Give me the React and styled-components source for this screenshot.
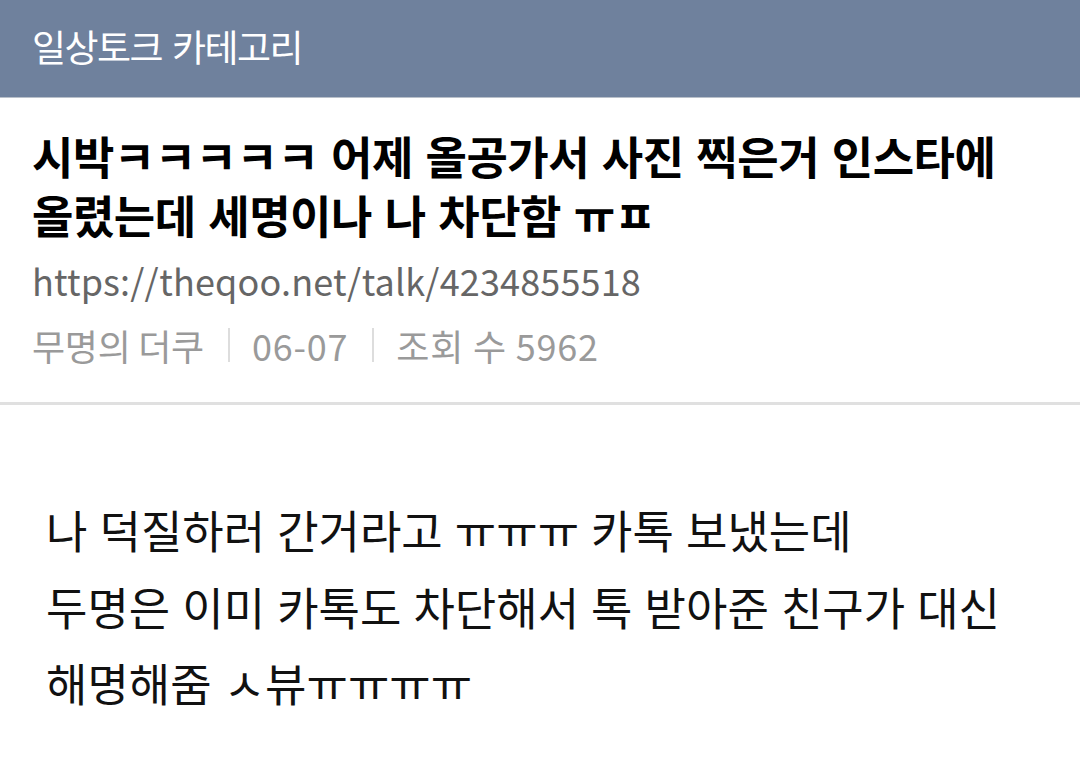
import styled, { createGlobalStyle } from "styled-components";

const GlobalStyle = createGlobalStyle`
  body {
    margin: 0;
    background: #ffffff;
    font-family: "Noto Sans CJK KR", "Noto Sans", sans-serif;
  }
`;

const post = {
  category: "일상토크 카테고리",
  title: "시박ㅋㅋㅋㅋㅋ 어제 올공가서 사진 찍은거 인스타에 올렸는데 세명이나 나 차단함 ㅠㅍ",
  url: "https://theqoo.net/talk/4234855518",
  meta: ["무명의 더쿠", "06-07", "조회 수 5962"],
  body: [
    "나 덕질하러 간거라고 ㅠㅠㅠ 카톡 보냈는데",
    "두명은 이미 카톡도 차단해서 톡 받아준 친구가 대신",
    "해명해줌 ㅅ뷰ㅠㅠㅠㅠ",
  ],
};

function App() {
  return (
    <Page>
      <GlobalStyle />
      <Header>{post.category}</Header>

      <PostHead>
        <Title>{post.title}</Title>
        <Url>{post.url}</Url>
        <Meta>
          {post.meta.map((item, index) => (
            <MetaItem key={item} first={index === 0}>
              {item}
            </MetaItem>
          ))}
        </Meta>
      </PostHead>

      <Body>
        {post.body.map((line) => (
          <Line key={line}>{line}</Line>
        ))}
      </Body>
    </Page>
  );
}

export default App;

const Page = styled.div`
  width: 1080px;
  min-height: 767px;
  background: #ffffff;
`;

const Header = styled.div`
  height: 98px;
  display: flex;
  align-items: center;
  padding: 0 32px 6px;
  background: #6f819d;
  border-bottom: 1px solid #b9c0ca;
  color: #ffffff;
  font-size: 37px;
  letter-spacing: -1.5px;
  word-spacing: 3px;
  box-sizing: border-box;
`;

const PostHead = styled.div`
  display: flex;
  flex-direction: column;
  padding: 28px 32px 31px;
  border-bottom: 3px solid #e0e0e0;
`;

const Title = styled.h1`
  margin: 0;
  font-size: 45px;
  font-weight: 700;
  line-height: 59px;
  letter-spacing: -0.5px;
  word-spacing: 3px;
  word-break: keep-all;
  color: #000000;
  max-width: 1000px;
`;

const Url = styled.div`
  margin-top: 10px;
  font-size: 36px;
  line-height: 52px;
  letter-spacing: 0.15px;
  color: #666666;
`;

const Meta = styled.div`
  display: flex;
  align-items: center;
  margin-top: 13px;
  font-size: 36px;
  line-height: 52px;
  color: #9a9a9a;
  letter-spacing: 0.3px;
`;

const MetaItem = styled.span`
  display: flex;
  align-items: center;
  letter-spacing: ${({ first }) => (first ? "-0.3px" : "0.8px")};

  &::before {
    content: "";
    display: ${({ first }) => (first ? "none" : "block")};
    width: 2px;
    height: 34px;
    margin: 0 22px 0 24px;
    background: #dddddd;
  }
`;

const Body = styled.div`
  display: flex;
  flex-direction: column;
  padding: 87px 46px 0;
`;

const Line = styled.p`
  margin: 0;
  font-size: 45px;
  line-height: 76.5px;
  word-spacing: 2px;
  word-break: keep-all;
  color: #111111;
`;
